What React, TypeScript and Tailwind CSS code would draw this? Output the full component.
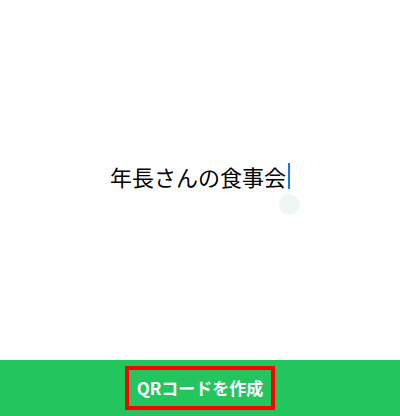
export default function App() {
  return (
    <div
      className="flex h-[416px] w-[400px] flex-col bg-white"
      style={{ fontFamily: '"Noto Sans CJK JP", "Noto Sans", sans-serif' }}
    >
      <main className="flex flex-1 items-center justify-center pb-[8px]">
        <div className="relative flex items-center">
          <span className="text-[22px] leading-[30px] text-black">年長さんの食事会</span>
          <span className="ml-[2px] h-[26px] w-[2px] bg-[#1a73e8]" />
          {/* tap ripple */}
          <span className="absolute left-[169px] top-[33px] h-[21px] w-[21px] rounded-full bg-[#eef7f6]" />
        </div>
      </main>
      <footer className="flex h-[56px] items-center justify-center bg-[#22c55e]">
        <button className="flex h-[44px] w-[150px] items-center justify-center border-4 border-[#ff0000] text-[17px] font-bold text-white">
          QRコードを作成
        </button>
      </footer>
    </div>
  );
}
